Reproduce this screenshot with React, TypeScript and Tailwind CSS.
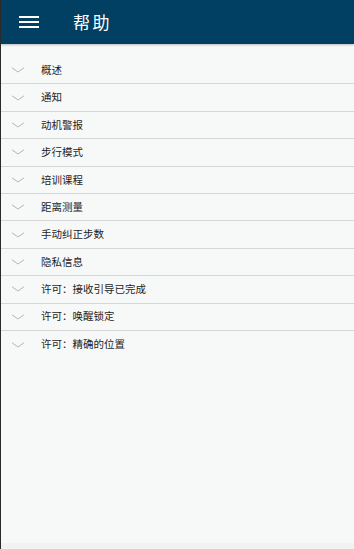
const items = [
  "概述",
  "通知",
  "动机警报",
  "步行模式",
  "培训课程",
  "距离测量",
  "手动纠正步数",
  "隐私信息",
  "许可：接收引导已完成",
  "许可：唤醒锁定",
  "许可：精确的位置",
];

function Chevron() {
  return (
    <svg width="14" height="6" viewBox="0 0 14 6" className="shrink-0">
      <path d="M1 0.8 L7 5 L13 0.8" fill="none" stroke="#b5b5b5" strokeWidth="1" />
    </svg>
  );
}

export default function App() {
  return (
    <div
      className="w-[354px] h-[549px] flex flex-col bg-[#f7f8f8] border-l border-[#2a2a2a] overflow-hidden"
      style={{ fontFamily: '"Noto Sans CJK SC", "Noto Sans", sans-serif' }}
    >
      {/* header */}
      <div className="h-[44px] shrink-0 bg-[#013f63] flex items-center shadow-[0_1px_2px_rgba(0,0,0,0.25)]">
        <div className="ml-[18px] w-[20px] flex flex-col gap-[3px]">
          <div className="h-[2px] bg-white" />
          <div className="h-[2px] bg-white" />
          <div className="h-[2px] bg-white" />
        </div>
        <h1 className="ml-[34px] text-[17px] text-white tracking-[2.5px]">帮助</h1>
      </div>

      {/* list */}
      <div className="flex-1 pt-[13px]">
        {items.map((label, i) => (
          <div
            key={label}
            className={`h-[27.4px] flex items-center pl-[10px] ${
              i < items.length - 1 ? "border-b border-[#d6d6d6]" : ""
            }`}
          >
            <Chevron />
            <span className="ml-[16px] text-[10.5px] text-[#1e1e1e] leading-none">{label}</span>
          </div>
        ))}
      </div>
      <div className="h-[6px] shrink-0 bg-[#f2f2f2]" />
    </div>
  );
}
